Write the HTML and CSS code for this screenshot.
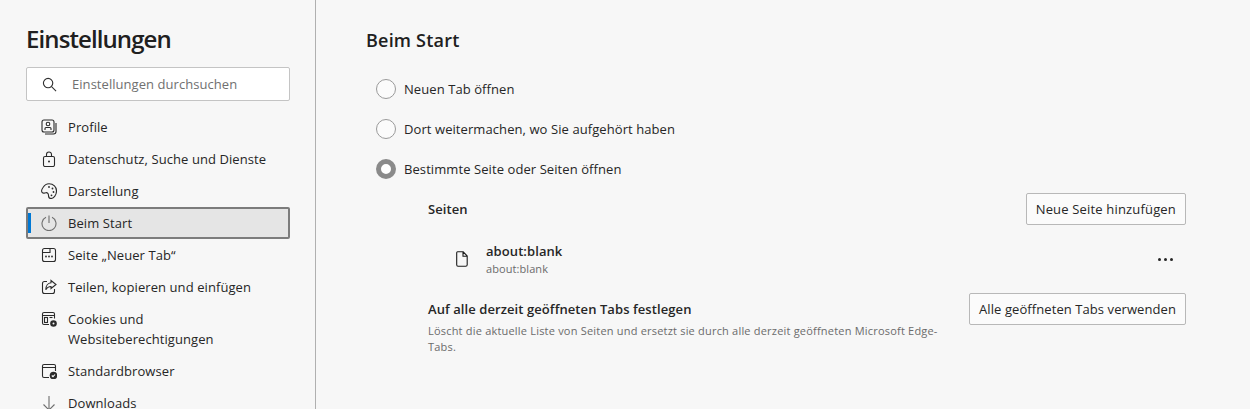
FILE: index.html
```html
<!DOCTYPE html>
<html lang="de">
<head>
    <meta charset="UTF-8">
    <title>Einstellungen</title>
    <link rel="stylesheet" href="styles.css">
</head>
<body>
    <aside class="sidebar">
        <h1 class="sidebar-title">Einstellungen</h1>
        <div class="search-box">
            <svg class="search-icon" viewBox="0 0 16 16"><circle cx="6.500" cy="6.500" r="5"/><path d="M10.200 10.200 15 15"/></svg>
            <span>Einstellungen durchsuchen</span>
        </div>
        <nav class="nav-list">
            <a class="nav-item" href="#">
                <svg class="nav-icon" viewBox="0 0 16 16"><rect x="1" y="1" width="12" height="12" rx="2"/><circle cx="7" cy="5" r="1.800"/><path d="M4 11V9.500q0-1 1-1h4q1 0 1 1V11M15 4v8.500q0 2.500-2.500 2.500H4"/></svg>
                <span>Profile</span>
            </a>
            <a class="nav-item" href="#">
                <svg class="nav-icon" viewBox="0 0 16 16"><rect x="2.500" y="5.500" width="11" height="10" rx="1.500"/><path d="M5.500 5.500V3.500a2.500 2.500 0 0 1 5 0v2"/><circle class="dot" cx="8" cy="10.500" r="1"/></svg>
                <span>Datenschutz, Suche und Dienste</span>
            </a>
            <a class="nav-item" href="#">
                <svg class="nav-icon" viewBox="0 0 16 16"><path d="M8 .8c4.500 0 7.500 3.200 7.500 7.200 0 4.200-3 7.500-5.500 7.500-2 0-2.500-1.500-2.500-3 0-2-1-3-2.500-2.800C3.500 9.900 2.500 10.500 1.500 9.800 0 8.800.5 6.500 2 4.500 3.500 2.200 5.500.8 8 .8z"/><circle class="dot" cx="8" cy="4" r=".9"/><circle class="dot" cx="11.500" cy="5.500" r=".9"/><circle class="dot" cx="12.500" cy="9" r=".9"/><circle class="dot" cx="10.500" cy="12.300" r=".9"/></svg>
                <span>Darstellung</span>
            </a>
            <a class="nav-item active" href="#">
                <svg class="nav-icon power" viewBox="0 0 16 16"><path d="M5 2.300a7 7 0 1 0 6 0M8 .5v7.500"/></svg>
                <span>Beim Start</span>
            </a>
            <a class="nav-item" href="#">
                <svg class="nav-icon" viewBox="0 0 16 16"><rect x="1.500" y="1.500" width="13" height="13" rx="2"/><path d="M1.500 5.500h7.500v-4"/><circle class="dot" cx="5" cy="9.500" r=".9"/><circle class="dot" cx="8" cy="9.500" r=".9"/><circle class="dot" cx="11" cy="9.500" r=".9"/></svg>
                <span>Seite „Neuer Tab“</span>
            </a>
            <a class="nav-item" href="#">
                <svg class="nav-icon" viewBox="0 0 16 16"><path d="M6 2.500H3.500q-2 0-2 2v8q0 2 2 2h8q2 0 2-2V10"/><path d="M10 1.500 15 5.500l-5 4V7.500C7.500 7.500 6 8.500 4.800 10.800 4.800 7 7 4 10 3.700z"/></svg>
                <span>Teilen, kopieren und einfügen</span>
            </a>
            <a class="nav-item two-line" href="#">
                <svg class="nav-icon" viewBox="0 0 16 16"><path d="M8 13.500H3q-1.500 0-1.500-1.500V3q0-1.500 1.500-1.500h9q1.500 0 1.500 1.500v4.500M1.500 4.500h12"/><rect x="3.500" y="6.500" width="3" height="5"/><path d="M8.500 6.500h3"/><circle class="dot" cx="12.500" cy="12.500" r="3.300"/><circle class="hole" cx="12.500" cy="12.500" r="1"/></svg>
                <span>Cookies und<br>Websiteberechtigungen</span>
            </a>
            <a class="nav-item" href="#">
                <svg class="nav-icon" viewBox="0 0 16 16"><path d="M8 14.500H3q-1.500 0-1.500-1.500V3q0-1.500 1.500-1.500h10q1.500 0 1.500 1.500v5M1.500 4.500h13"/><circle class="dot" cx="12.500" cy="12.500" r="3.800"/><path class="check" d="m10.800 12.500 1.200 1.200 2-2.200"/></svg>
                <span>Standardbrowser</span>
            </a>
            <a class="nav-item" href="#">
                <svg class="nav-icon soft" viewBox="0 0 16 16"><path d="M8 1v14M2.500 9.500 8 15l5.500-5.500"/></svg>
                <span>Downloads</span>
            </a>
        </nav>
    </aside>

    <main class="content">
        <h2 class="page-title">Beim Start</h2>

        <div class="radio-group">
            <label class="radio-row"><span class="radio"></span>Neuen Tab öffnen</label>
            <label class="radio-row"><span class="radio"></span>Dort weitermachen, wo Sie aufgehört haben</label>
            <label class="radio-row"><span class="radio checked"></span>Bestimmte Seite oder Seiten öffnen</label>
        </div>

        <section class="pages">
            <div class="pages-head">
                <strong>Seiten</strong>
                <button class="btn btn-add">Neue Seite hinzufügen</button>
            </div>
            <div class="page-row">
                <svg class="file-icon" viewBox="0 0 12 16"><path d="M1.500.8h5.700l4 4.200v8.700q0 1.500-1.500 1.500H2q-1.300 0-1.300-1.500V1.800q0-1 .8-1zM7 .8v4.400h4.200"/></svg>
                <div class="page-text">
                    <div class="page-name">about:blank</div>
                    <div class="page-url">about:blank</div>
                </div>
                <div class="more"><i></i><i></i><i></i></div>
            </div>
            <div class="set-row">
                <div class="set-text">
                    <strong>Auf alle derzeit geöffneten Tabs festlegen</strong>
                    <p>Löscht die aktuelle Liste von Seiten und ersetzt sie durch alle derzeit geöffneten Microsoft Edge-Tabs.</p>
                </div>
                <button class="btn">Alle geöffneten Tabs verwenden</button>
            </div>
        </section>
    </main>
</body>
</html>
```

FILE: styles.css
```css
* {
    margin: 0;
    padding: 0;
    box-sizing: border-box;
}

html, body {
    height: 409px;
    overflow: hidden;
}

body {
    display: flex;
    background: #f7f7f7;
    color: #262626;
    font-family: "Open Sans", "Noto Sans", sans-serif;
    font-size: 13px;
    letter-spacing: 0.08px;
}

.sidebar {
    width: 316px;
    flex-shrink: 0;
    height: 409px;
    padding: 22px 25px 0 26px;
    border-right: 1px solid #b0b0b0;
    overflow: hidden;
}

.sidebar-title {
    font-size: 24px;
    font-weight: 600;
    line-height: 34px;
    letter-spacing: -0.9px;
    color: #202020;
}

.search-box {
    display: flex;
    align-items: center;
    gap: 15px;
    width: 264px;
    height: 34px;
    margin-top: 11px;
    padding-left: 15px;
    background: #fff;
    border: 1px solid #c4c4c4;
    border-radius: 2px;
    color: #707070;
    letter-spacing: 0.05px;
}

.search-icon {
    width: 15px;
    height: 15px;
    fill: none;
    stroke: #303030;
    stroke-width: 1.200;
}

.nav-list {
    display: flex;
    flex-direction: column;
    width: 264px;
    margin-top: 10px;
}

.nav-item {
    position: relative;
    display: flex;
    align-items: center;
    gap: 11px;
    min-height: 32px;
    padding-left: 14px;
    color: #262626;
    text-decoration: none;
    line-height: 20px;
}

.nav-item.two-line {
    align-items: flex-start;
    padding-top: 6px;
    padding-bottom: 6px;
}

.nav-icon {
    width: 16px;
    height: 16px;
    flex-shrink: 0;
    margin-left: 1px;
    fill: none;
    stroke: #2b2b2b;
    stroke-width: 1.100;
}

.nav-item.two-line .nav-icon {
    margin-top: 2px;
}

.nav-icon .dot {
    fill: #2b2b2b;
    stroke: none;
}

.nav-icon .hole {
    fill: #f7f7f7;
    stroke: none;
}

.nav-icon .check {
    stroke: #fff;
}

.nav-icon.soft,
.nav-icon.power {
    stroke: #6e6e6e;
}

.nav-item.active {
    background: #e5e5e5;
    border: 2px solid #7c7c7c;
    border-radius: 2px;
    padding-left: 12px;
}

.nav-item.active::before {
    content: '';
    position: absolute;
    left: 0;
    top: 4px;
    bottom: 4px;
    width: 3px;
    background: #0078d4;
}

.content {
    flex: 1;
    padding: 28px 64px 0 50px;
}

.page-title {
    font-size: 18px;
    font-weight: 600;
    line-height: 24px;
    letter-spacing: 0.2px;
    color: #202020;
}

.radio-group {
    display: flex;
    flex-direction: column;
    gap: 20px;
    margin-top: 27px;
    padding-left: 10px;
}

.radio-row {
    display: flex;
    align-items: center;
    gap: 8px;
    height: 20px;
}

.radio {
    width: 20px;
    height: 20px;
    border: 1px solid #9a9a9a;
    border-radius: 50%;
    background: #fbfbfb;
}

.radio.checked {
    border: 5px solid #8a8a8a;
    background: #fff;
}

.pages {
    margin-top: 14px;
    padding-left: 62px;
}

.pages strong,
.page-name {
    font-weight: 600;
    color: #262626;
}

.pages-head {
    display: flex;
    align-items: center;
    justify-content: space-between;
    height: 32px;
}

.btn {
    height: 32px;
    padding: 0 9px;
    background: #fbfbfb;
    border: 1px solid #b8b8b8;
    border-radius: 2px;
    color: #262626;
    font: inherit;
    letter-spacing: inherit;
}

.btn-add {
    letter-spacing: 0.17px;
}

.page-row {
    display: flex;
    align-items: center;
    height: 68px;
    padding-left: 28px;
}

.file-icon {
    width: 12px;
    height: 16px;
    fill: none;
    stroke: #1c1c1c;
    stroke-width: 1.100;
}

.page-text {
    flex: 1;
    margin-left: 18px;
    padding-top: 2px;
}

.page-name {
    line-height: 18px;
}

.page-url {
    font-size: 11px;
    line-height: 18px;
    color: #6b6b6b;
}

.more {
    display: flex;
    gap: 3px;
    margin-right: 13px;
}

.more i {
    width: 3px;
    height: 3px;
    background: #262626;
    border-radius: 50%;
}

.set-row {
    display: flex;
    align-items: flex-start;
    justify-content: space-between;
}

.set-text {
    width: 512px;
    padding-top: 6px;
}

.set-text strong {
    display: block;
    line-height: 20px;
}

.set-text p {
    margin-top: 4px;
    font-size: 11px;
    line-height: 16px;
    letter-spacing: 0.2px;
    color: #6b6b6b;
}
```
